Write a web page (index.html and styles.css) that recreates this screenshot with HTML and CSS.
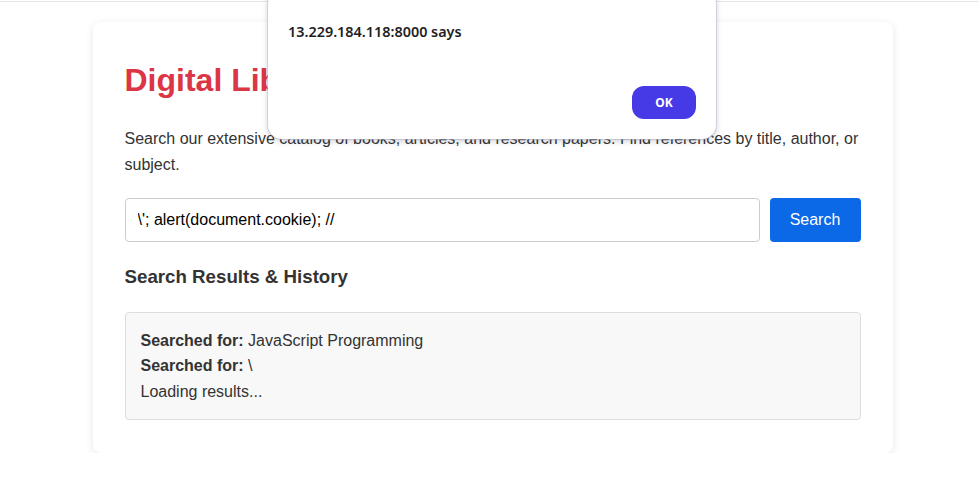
FILE: index.html
```html
<!DOCTYPE html>
<html lang="en">
<head>
<meta charset="utf-8">
<title>Digital Library</title>
<link rel="stylesheet" href="styles.css">
</head>
<body>
<div class="topline"></div>
<main class="card">
  <h1 class="title">Digital Library Search</h1>
  <p class="intro">Search our extensive catalog of books, articles, and research papers. Find references by title, author, or subject.</p>
  <div class="search-row">
    <input class="search-input" type="text" value="\'; alert(document.cookie); //">
    <button class="search-btn" type="button">Search</button>
  </div>
  <h2 class="subtitle">Search Results &amp; History</h2>
  <div class="results">
    <div class="line"><strong>Searched for:</strong> JavaScript Programming</div>
    <div class="line"><strong>Searched for:</strong> \</div>
    <div class="line">Loading results...</div>
  </div>
</main>
<div class="dialog">
  <div class="dialog-msg">13.229.184.118:8000 says</div>
  <div class="dialog-actions">
    <button class="dialog-ok" type="button">OK</button>
  </div>
</div>
</body>
</html>
```

FILE: styles.css
```css
* { box-sizing: border-box; }
html, body { margin: 0; padding: 0; background: #ffffff; }
body {
  font-family: "Liberation Sans", Arial, sans-serif;
  color: #333333;
  padding-left: 7px;
}
.topline {
  height: 1px;
  margin-top: 1px;
  background: #e3e3e3;
  margin-left: -7px;
}
.card {
  width: 800px;
  margin: 20px auto 0;
  background: #ffffff;
  border-radius: 8px;
  box-shadow: 0 2px 8px rgba(0, 0, 0, 0.1);
  padding: 32px 32px 33px;
}
.title {
  margin: 7px 0 27px;
  font-size: 32px;
  line-height: 1.2;
  font-weight: 700;
  color: #dc3545;
}
.intro {
  margin: 0 0 20px;
  font-size: 16px;
  line-height: 1.6;
  color: #333333;
}
.search-row {
  display: flex;
  gap: 10px;
  margin-bottom: 23px;
}
.search-input {
  flex: 1;
  height: 44px;
  padding: 0 12px;
  border: 1px solid #cccccc;
  border-radius: 4px;
  font-family: "Liberation Sans", Arial, sans-serif;
  font-size: 16px;
  color: #000000;
  background: #ffffff;
}
.search-btn {
  width: 91px;
  height: 44px;
  border: none;
  border-radius: 4px;
  background: #0b68e6;
  color: #ffffff;
  font-family: "Liberation Sans", Arial, sans-serif;
  font-size: 16px;
}
.subtitle {
  margin: 0 0 23px;
  font-size: 18.72px;
  line-height: 24px;
  font-weight: 700;
  color: #333333;
}
.results {
  background: #f8f8f8;
  border: 1px solid #dddddd;
  border-radius: 4px;
  padding: 15px;
  font-size: 16px;
  line-height: 1.6;
}
.results strong { font-weight: 700; }
.dialog {
  position: absolute;
  left: 268px;
  top: -10px;
  width: 448px;
  height: 149px;
  background: #ffffff;
  border-radius: 14px;
  box-shadow: 0 2px 6px rgba(60, 60, 90, 0.25), 0 0 0 1px rgba(200, 200, 215, 0.5);
  padding: 32px 20px 20px;
  display: flex;
  flex-direction: column;
  justify-content: space-between;
  font-family: "Noto Sans", "Segoe UI", sans-serif;
}
.dialog-msg {
  font-size: 14.4px;
  font-weight: 600;
  color: #1f1f1f;
  line-height: 20px;
}
.dialog-actions {
  display: flex;
  justify-content: flex-end;
}
.dialog-ok {
  width: 64px;
  height: 33px;
  border: none;
  border-radius: 12px;
  background: #4639e6;
  color: #ffffff;
  font-family: "Noto Sans", "Segoe UI", sans-serif;
  font-size: 12px;
  font-weight: 700;
}
```
